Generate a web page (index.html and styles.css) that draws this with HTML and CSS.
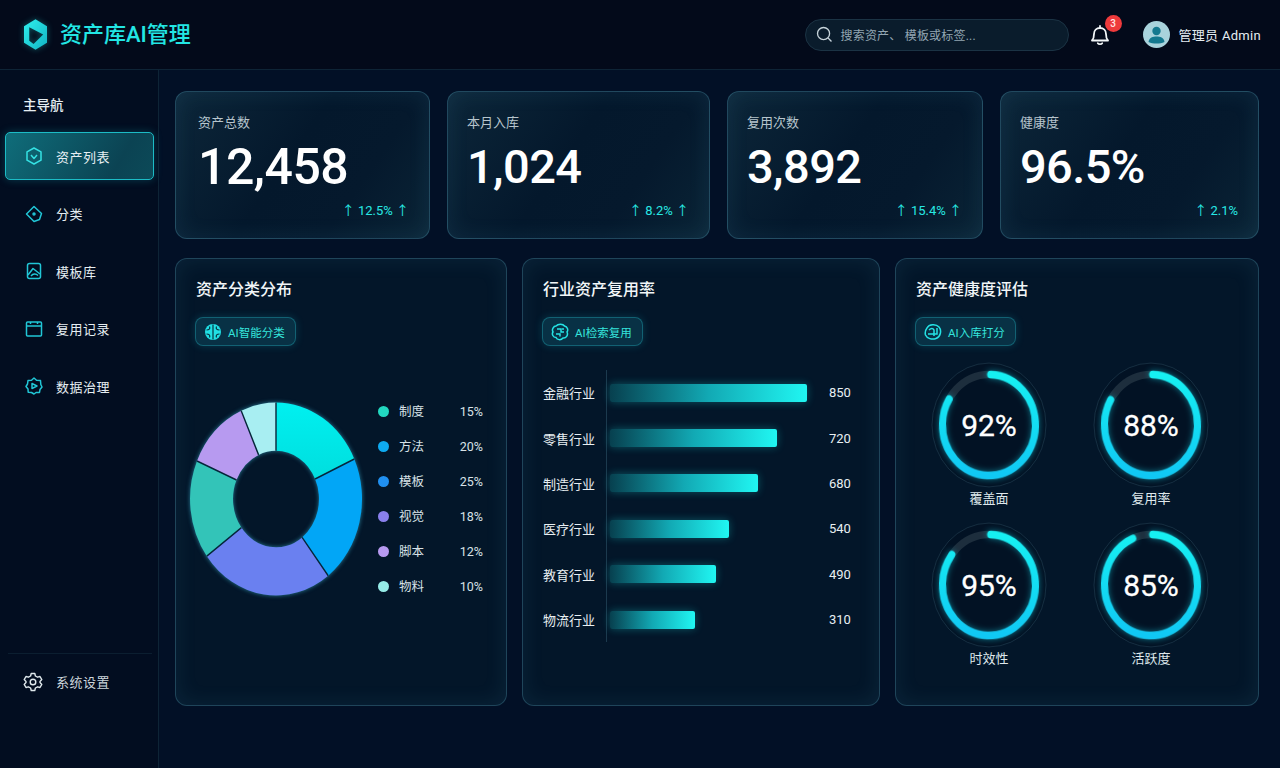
FILE: index.html
```html
<!DOCTYPE html>
<html lang="zh-CN">
<head>
  <meta charset="utf-8">
  <title>资产库AI管理</title>
  <link rel="stylesheet" href="styles.css">
</head>
<body>
  <!-- Top bar -->
  <header class="topbar">
    <svg class="logo" viewBox="0 0 24 32">
      <defs>
        <linearGradient id="logoFill" x1="0" y1="0" x2="1" y2="1">
          <stop offset="0" stop-color="#2ff0ee"/>
          <stop offset="1" stop-color="#12b4c4"/>
        </linearGradient>
      </defs>
      <path fill="url(#logoFill)" fill-rule="evenodd" d="M12 0 L24 7.5 V24.5 L12 32 L0 24.5 V7.5 Z M5.5 8.5 L20 16 L10 26 L5.5 22.5 Z"/>
    </svg>
    <h1 class="brand">资产库AI管理</h1>
    <div class="search">
      <svg class="search-icon" viewBox="0 0 18 18">
        <circle cx="8" cy="8" r="6.4"/>
        <path d="M12.8 12.8 L16.4 16.4"/>
      </svg>
      <span>搜索资产、 模板或标签...</span>
    </div>
    <div class="bell">
      <svg viewBox="0 0 22 22">
        <path d="M3 16.5 C5 14.5 5 12.5 5 10 C5 6.5 7.5 4 11 4 C14.5 4 17 6.5 17 10 C17 12.5 17 14.5 19 16.5 Z"/>
        <path d="M8.8 19.2 C9.6 20.4 12.4 20.4 13.2 19.2"/>
        <path d="M11 2 V4"/>
      </svg>
      <span class="badge">3</span>
    </div>
    <div class="user">
      <svg class="avatar" viewBox="0 0 27 27">
        <circle cx="13.5" cy="13.5" r="13.5" fill="#a9d3dc"/>
        <circle cx="13.5" cy="10" r="4.2" fill="#14798f"/>
        <path d="M5.5 21 C6 16.5 10 15.5 13.5 15.5 C17 15.5 21 16.5 21.5 21 C17 23 10 23 5.5 21 Z" fill="#14798f"/>
      </svg>
      <span>管理员 Admin</span>
    </div>
  </header>

  <div class="layout">
    <!-- Left navigation -->
    <nav class="sidebar">
      <div class="nav-title">主导航</div>
      <ul class="nav-list">
        <li class="nav-item active">
          <svg viewBox="0 0 18 18"><path d="M9 1 L16 4.8 V13.2 L9 17 L2 13.2 V4.8 Z"/><path d="M6 8 L9 11.5 L12 8"/></svg>
          <span>资产列表</span>
        </li>
        <li class="nav-item">
          <svg viewBox="0 0 18 18"><path d="M9 1.5 L16.5 8.5 L14.5 14.5 L9 16.5 L1.5 9 Z"/><circle cx="9" cy="9" r="1"/></svg>
          <span>分类</span>
        </li>
        <li class="nav-item">
          <svg viewBox="0 0 18 18"><rect x="2.5" y="1.5" width="13" height="15" rx="2"/><path d="M3 13 L8 6.5 L15 12"/><path d="M6 14 C8 11.5 11 11.5 13 13.5"/></svg>
          <span>模板库</span>
        </li>
        <li class="nav-item">
          <svg viewBox="0 0 18 18"><rect x="1.5" y="2" width="15" height="14" rx="1"/><path d="M1.5 6 H16.5"/><path d="M5.5 2 V4"/><path d="M12.5 2 V4"/></svg>
          <span>复用记录</span>
        </li>
        <li class="nav-item">
          <svg viewBox="0 0 18 18"><path d="M9 1 L11.5 3.2 L15.5 3.5 L15.8 7.5 L17 10 L15 12.5 L14.5 15.5 L11 15.5 L9 17 L6.5 15.5 L3.2 15.2 L3 12 L1 9.5 L2.5 7 L3 3.5 L6.5 3.2 Z"/><path d="M7 6.5 L12 9 L7 11.5 Z"/></svg>
          <span>数据治理</span>
        </li>
      </ul>
      <div class="sidebar-foot">
        <svg viewBox="0 0 20 20"><path d="M8.2 1.5 H11.8 L12.4 4 L14.6 5.2 L17 4.5 L18.8 7.6 L17 9.4 V10.6 L18.8 12.4 L17 15.5 L14.6 14.8 L12.4 16 L11.8 18.5 H8.2 L7.6 16 L5.4 14.8 L3 15.5 L1.2 12.4 L3 10.6 V9.4 L1.2 7.6 L3 4.5 L5.4 5.2 L7.6 4 Z"/><circle cx="10" cy="10" r="2.8"/></svg>
        <span>系统设置</span>
      </div>
    </nav>

    <main class="content">
      <!-- Headline figures -->
      <section class="stats">
        <div class="stat">
          <div class="stat-label">资产总数</div>
          <div class="stat-value">12,458</div>
          <div class="stat-delta">↑ 12.5% ↑</div>
        </div>
        <div class="stat">
          <div class="stat-label">本月入库</div>
          <div class="stat-value">1,024</div>
          <div class="stat-delta">↑ 8.2% ↑</div>
        </div>
        <div class="stat">
          <div class="stat-label">复用次数</div>
          <div class="stat-value">3,892</div>
          <div class="stat-delta">↑ 15.4% ↑</div>
        </div>
        <div class="stat">
          <div class="stat-label">健康度</div>
          <div class="stat-value">96.5%</div>
          <div class="stat-delta">↑ 2.1%</div>
        </div>
      </section>

      <section class="panels">
        <!-- Category donut -->
        <div class="panel">
          <h2>资产分类分布</h2>
          <div class="chip">
            <svg viewBox="0 0 18 18"><circle class="chip-disc" cx="9" cy="9" r="8"/><path d="M9 1.5 V16.5 M5.5 3.5 C6.5 6 5 7 2.5 7 M5.5 14.5 C6.5 12 5 11 2.5 11 M12.5 3.5 C11.5 6 13 7 15.5 7 M12.5 14.5 C11.5 12 13 11 15.5 11"/></svg>
            <span>AI智能分类</span>
          </div>
          <div class="donut-wrap">
            <svg class="donut" viewBox="-90 -90 180 180" preserveAspectRatio="none">
              <defs>
                <linearGradient id="segCyan" x1="0" y1="0" x2="0" y2="1">
                  <stop offset="0" stop-color="#00f0f0"/>
                  <stop offset="1" stop-color="#00dede"/>
                </linearGradient>
              </defs>
              <path fill="url(#segCyan)" d="M0 -86 A86 86 0 0 1 78.3 -35.7 L39.1 -17.8 A43 43 0 0 0 0 -43 Z"/>
              <path fill="#02a6f6" d="M78.3 -35.7 A86 86 0 0 1 52.2 68.3 L26.1 34.2 A43 43 0 0 0 39.1 -17.8 Z"/>
              <path fill="#6a80f0" d="M52.2 68.3 A86 86 0 0 1 -69.2 51 L-34.6 25.5 A43 43 0 0 0 26.1 34.2 Z"/>
              <path fill="#33c4b8" d="M-69.2 51 A86 86 0 0 1 -79 -33.9 L-39.5 -16.9 A43 43 0 0 0 -34.6 25.5 Z"/>
              <path fill="#b79af0" d="M-79 -33.9 A86 86 0 0 1 -34.8 -78.6 L-17.4 -39.3 A43 43 0 0 0 -39.5 -16.9 Z"/>
              <path fill="#a8eef2" d="M-34.8 -78.6 A86 86 0 0 1 0 -86 L0 -43 A43 43 0 0 0 -17.4 -39.3 Z"/>
              <path class="donut-gaps" d="M0 -86 L0 -43 M78.3 -35.7 L39.1 -17.8 M52.2 68.3 L26.1 34.2 M-69.2 51 L-34.6 25.5 M-79 -33.9 L-39.5 -16.9 M-34.8 -78.6 L-17.4 -39.3"/>
            </svg>
            <ul class="legend">
              <li><i class="dot dot-teal"></i><span>制度</span><b>15%</b></li>
              <li><i class="dot dot-sky"></i><span>方法</span><b>20%</b></li>
              <li><i class="dot dot-blue"></i><span>模板</span><b>25%</b></li>
              <li><i class="dot dot-violet"></i><span>视觉</span><b>18%</b></li>
              <li><i class="dot dot-lilac"></i><span>脚本</span><b>12%</b></li>
              <li><i class="dot dot-pale"></i><span>物料</span><b>10%</b></li>
            </ul>
          </div>
        </div>

        <!-- Industry bars -->
        <div class="panel">
          <h2>行业资产复用率</h2>
          <div class="chip">
            <svg viewBox="0 0 18 18"><path class="chip-line" d="M5 3 C7 0.5 12 0.5 13.5 3 C16.5 3.5 17.5 7 16 9 C17.5 12 15 15.5 12 15 C10 17.5 6 17 5 14.5 C2 14.5 0.5 11 2 9 C0.5 6.5 2.5 3 5 3 Z"/><path class="chip-line" d="M6 6 H10 V9 H13 M5 11 H9 V13.5 M12 5 V7"/></svg>
            <span>AI检索复用</span>
          </div>
          <div class="bars">
            <div class="bar-row"><span>金融行业</span><div class="track"><div class="bar" style="width:197px"></div></div><b>850</b></div>
            <div class="bar-row"><span>零售行业</span><div class="track"><div class="bar" style="width:167px"></div></div><b>720</b></div>
            <div class="bar-row"><span>制造行业</span><div class="track"><div class="bar" style="width:148px"></div></div><b>680</b></div>
            <div class="bar-row"><span>医疗行业</span><div class="track"><div class="bar" style="width:119px"></div></div><b>540</b></div>
            <div class="bar-row"><span>教育行业</span><div class="track"><div class="bar" style="width:106px"></div></div><b>490</b></div>
            <div class="bar-row"><span>物流行业</span><div class="track"><div class="bar" style="width:85px"></div></div><b>310</b></div>
          </div>
        </div>

        <!-- Health rings -->
        <div class="panel">
          <h2>资产健康度评估</h2>
          <div class="chip">
            <svg viewBox="0 0 18 18"><path class="chip-line" d="M3 5 C5 1 12 0.5 15 4 C18 7.5 16.5 14 12 15.5 C8 17 3 15.5 1.5 12 C0.8 9.5 1.5 7 3 5 Z"/><path class="chip-line" d="M5 7 C7 5 9 5 10 7 V13 M13 5 V11 H7 M4 11 H7"/></svg>
            <span>AI入库打分</span>
          </div>
          <div class="rings">
            <div class="ring-item">
              <div class="ring">
                <svg viewBox="0 0 116 116" preserveAspectRatio="none">
                  <defs>
                    <linearGradient id="arcFill" x1="1" y1="0" x2="0" y2="0">
                      <stop offset="0" stop-color="#16f0f2"/>
                      <stop offset="1" stop-color="#10c8f4"/>
                    </linearGradient>
                  </defs>
                  <circle class="ring-halo" cx="58" cy="58" r="57"/>
                  <circle class="ring-track" cx="58" cy="58" r="46.5"/>
                  <circle class="ring-arc" cx="58" cy="58" r="46.5" pathLength="360" stroke-dasharray="299 360" transform="rotate(-88 58 58)"/>
                </svg>
                <span class="ring-value">92%</span>
              </div>
              <div class="ring-label">覆盖面</div>
            </div>
            <div class="ring-item">
              <div class="ring">
                <svg viewBox="0 0 116 116" preserveAspectRatio="none">
                  <circle class="ring-halo" cx="58" cy="58" r="57"/>
                  <circle class="ring-track" cx="58" cy="58" r="46.5"/>
                  <circle class="ring-arc" cx="58" cy="58" r="46.5" pathLength="360" stroke-dasharray="298 360" transform="rotate(-88 58 58)"/>
                </svg>
                <span class="ring-value">88%</span>
              </div>
              <div class="ring-label">复用率</div>
            </div>
            <div class="ring-item">
              <div class="ring">
                <svg viewBox="0 0 116 116" preserveAspectRatio="none">
                  <circle class="ring-halo" cx="58" cy="58" r="57"/>
                  <circle class="ring-track" cx="58" cy="58" r="46.5"/>
                  <circle class="ring-arc" cx="58" cy="58" r="46.5" pathLength="360" stroke-dasharray="305 360" transform="rotate(-88 58 58)"/>
                </svg>
                <span class="ring-value">95%</span>
              </div>
              <div class="ring-label">时效性</div>
            </div>
            <div class="ring-item">
              <div class="ring">
                <svg viewBox="0 0 116 116" preserveAspectRatio="none">
                  <circle class="ring-halo" cx="58" cy="58" r="57"/>
                  <circle class="ring-track" cx="58" cy="58" r="46.5"/>
                  <circle class="ring-arc" cx="58" cy="58" r="46.5" pathLength="360" stroke-dasharray="335 360" transform="rotate(-88 58 58)"/>
                </svg>
                <span class="ring-value">85%</span>
              </div>
              <div class="ring-label">活跃度</div>
            </div>
          </div>
        </div>
      </section>
    </main>
  </div>
</body>
</html>
```

FILE: styles.css
```css
:root {
  --line: #0e2436;
  --cyan: #27e8e4;
  --text: #e6eef2;
  --panel-border: rgba(96, 178, 206, 0.3);
}

* {
  box-sizing: border-box;
}

body {
  margin: 0;
  width: 1280px;
  height: 768px;
  overflow: hidden;
  background: #021026;
  color: var(--text);
  font-family: "Roboto", "Noto Sans CJK SC", sans-serif;
  display: flex;
  flex-direction: column;
}

ul {
  list-style: none;
  margin: 0;
  padding: 0;
}

/* top bar */
.topbar {
  height: 70px;
  flex: none;
  display: flex;
  align-items: center;
  padding: 0 19px 0 24px;
  background: #030a1a;
  border-bottom: 1px solid var(--line);
}

.logo {
  width: 23px;
  height: 31px;
  filter: drop-shadow(0 0 3px rgba(40, 230, 230, 0.35));
}

.brand {
  margin: 0 0 5px 13px;
  font-size: 22px;
  font-weight: 500;
  color: #22e6e4;
}

.search {
  margin-left: auto;
  width: 264px;
  height: 32px;
  display: flex;
  align-items: center;
  gap: 8px;
  padding: 0 10px;
  background: #0a1c2c;
  border: 1px solid #1b3344;
  border-radius: 16px;
  font-size: 12px;
  letter-spacing: 0.2px;
  color: #93a6b2;
}

.search-icon {
  width: 17px;
  height: 17px;
  fill: none;
  stroke: #c6d3da;
  stroke-width: 1.4;
}

.bell {
  position: relative;
  width: 22px;
  height: 22px;
  margin-left: 20px;
}

.bell svg {
  width: 22px;
  height: 22px;
  fill: none;
  stroke: #f2f6f8;
  stroke-width: 1.8;
  stroke-linecap: round;
  stroke-linejoin: round;
}

.badge {
  position: absolute;
  top: -9px;
  left: 16px;
  width: 17px;
  height: 17px;
  border-radius: 50%;
  background: #ee3a3c;
  color: #ffe4e4;
  font-size: 10px;
  font-weight: 500;
  line-height: 17px;
  text-align: center;
}

.user {
  margin-left: 32px;
  display: flex;
  align-items: center;
  gap: 9px;
  font-size: 13px;
  letter-spacing: 0.3px;
}

.avatar {
  width: 27px;
  height: 27px;
}

/* sidebar + main */
.layout {
  flex: 1;
  display: flex;
  min-height: 0;
}

.sidebar {
  width: 159px;
  flex: none;
  display: flex;
  flex-direction: column;
  padding: 0 4px 0 5px;
  background: #020d20;
  border-right: 1px solid var(--line);
}

.nav-title {
  margin: 26px 0 0 18px;
  font-size: 13.5px;
  line-height: 18px;
  font-weight: 500;
}

.nav-list {
  margin-top: 18px;
  display: flex;
  flex-direction: column;
  gap: 9.5px;
}

.nav-item {
  height: 48px;
  display: flex;
  align-items: center;
  gap: 13px;
  padding-left: 19px;
  font-size: 13px;
  letter-spacing: 0.5px;
  border: 1px solid transparent;
  border-radius: 5px;
}

.nav-item svg {
  width: 18px;
  height: 18px;
  flex: none;
  fill: none;
  stroke: #21c6d6;
  stroke-width: 1.5;
  stroke-linejoin: round;
}

.nav-item.active {
  background: linear-gradient(120deg, #0f6d7a, #0b4353 75%, #0c4a58);
  border-color: #1cbcc6;
  box-shadow: 0 0 8px rgba(30, 200, 210, 0.25);
}

.nav-item.active svg {
  stroke: #35e2e4;
}

.sidebar-foot {
  margin-top: auto;
  height: 115px;
  padding: 18px 0 0 19px;
  margin-left: 3px;
  margin-right: 2px;
  display: flex;
  align-items: flex-start;
  gap: 13px;
  border-top: 1px solid #0b1e30;
  font-size: 13px;
  letter-spacing: 0.5px;
  color: #ccd6dc;
}

.sidebar-foot svg {
  width: 20px;
  height: 20px;
  margin-left: -4px;
  fill: none;
  stroke: #dfe8ec;
  stroke-width: 1.4;
  stroke-linejoin: round;
}

.content {
  flex: 1;
  min-width: 0;
  padding: 21px 21px 0 16px;
}

/* stat cards */
.stats {
  display: grid;
  grid-template-columns: 255px 263px 256px 259px;
  gap: 17px;
  height: 148px;
}

.stat,
.panel {
  border: 1px solid var(--panel-border);
  border-radius: 12px;
  box-shadow: inset 0 0 22px rgba(90, 180, 220, 0.1);
}

.stat {
  padding: 22px 19px 0;
  background: linear-gradient(125deg, #0c2639, #04182c 45%, #05192d 70%, #0a2436);
}

.stat:first-child {
  padding-left: 22px;
}

.stat-label {
  font-size: 13px;
  line-height: 18px;
  color: #b7c5cd;
}

.stat-value {
  margin-top: 7px;
  font-size: 47px;
  line-height: 56px;
  font-weight: 500;
  color: #fff;
  letter-spacing: -0.6px;
}

.stat:first-child .stat-value {
  font-size: 50px;
  letter-spacing: -0.5px;
}

.stat-delta {
  margin-top: 8px;
  padding-right: 1px;
  font-size: 13px;
  line-height: 16px;
  text-align: right;
  color: var(--cyan);
}

/* panels */
.panels {
  margin-top: 19px;
  height: 448px;
  display: grid;
  grid-template-columns: 332px 358px 364px;
  gap: 15px;
}

.panel {
  padding: 20px 20px 0;
  display: flex;
  flex-direction: column;
  align-items: flex-start;
  background: #031629;
}

.panel h2 {
  margin: 0 0 16px;
  font-size: 16px;
  line-height: 22px;
  font-weight: 500;
  color: #f2f6f8;
}

.chip {
  height: 29px;
  margin-left: -1px;
  display: inline-flex;
  align-items: center;
  gap: 6px;
  padding: 0 10px 0 8px;
  background: rgba(20, 110, 130, 0.32);
  border: 1px solid rgba(40, 190, 200, 0.35);
  border-radius: 8px;
  box-shadow: 0 0 8px rgba(30, 200, 220, 0.2);
  font-size: 11.5px;
  color: #35e4dc;
}

.chip svg {
  width: 18px;
  height: 18px;
  fill: none;
  stroke: #06333f;
  stroke-width: 1.2;
}

.chip-disc {
  fill: #21dfe4;
  stroke: none;
}

.chip .chip-line {
  stroke: #25e2e4;
  stroke-width: 1.5;
}

/* donut */
.donut-wrap {
  margin: 52px 0 0 -10px;
  display: flex;
  align-items: center;
  gap: 12px;
}

.donut {
  width: 180px;
  height: 202px;
  flex: none;
  filter: drop-shadow(0 0 2px rgba(70, 210, 245, 0.55));
}

.donut-gaps {
  fill: none;
  stroke: #06263a;
  stroke-width: 1.4;
}

.legend {
  width: 105px;
  display: flex;
  flex-direction: column;
  gap: 15px;
  font-size: 12.5px;
  line-height: 20px;
}

.legend li {
  display: flex;
  align-items: center;
  color: #d8e2e7;
}

.legend b {
  margin-left: auto;
  font-weight: 400;
}

.dot {
  width: 11px;
  height: 11px;
  margin-right: 10px;
  border-radius: 50%;
}

.dot-teal { background: #22d8c0; }
.dot-sky { background: #0eaaf0; }
.dot-blue { background: #2090f0; }
.dot-violet { background: #8a80ec; }
.dot-lilac { background: #b79af0; }
.dot-pale { background: #96ece8; }

/* bars */
.bars {
  margin-top: 24px;
  width: 100%;
  display: grid;
  grid-auto-rows: 45.4px;
}

.bar-row {
  display: grid;
  grid-template-columns: 63px 223px auto;
  align-items: center;
  font-size: 13px;
  color: #e8eff2;
}

.bar-row b {
  font-weight: 400;
}

.track {
  height: 100%;
  display: flex;
  align-items: center;
  padding-left: 3px;
  border-left: 1px solid #1c3a4e;
}

.bar {
  height: 18px;
  border-radius: 2px;
  background: linear-gradient(90deg, #07404f, #12a9b4 50%, #20f6f2);
  box-shadow: 0 0 8px rgba(30, 240, 240, 0.3);
}

/* rings */
.rings {
  margin: 16px 0 0 -8px;
  display: grid;
  grid-template-columns: 162px 162px;
  row-gap: 15px;
}

.ring-item {
  display: flex;
  flex-direction: column;
  align-items: center;
}

.ring {
  display: grid;
  place-items: center;
}

.ring svg,
.ring-value {
  grid-area: 1 / 1;
}

.ring svg {
  width: 116px;
  height: 126px;
}

.ring-halo {
  fill: rgba(2, 12, 28, 0.35);
  stroke: rgba(120, 180, 200, 0.2);
  stroke-width: 0.8;
}

.ring-track {
  fill: none;
  stroke: #1d2e3d;
  stroke-width: 7;
}

.ring-arc {
  fill: none;
  stroke: url(#arcFill);
  stroke-width: 7;
  stroke-linecap: round;
  filter: drop-shadow(0 0 3px rgba(20, 220, 240, 0.5));
}

.ring-value {
  font-size: 30px;
  color: #fff;
  -webkit-text-stroke: 0.3px #fff;
}

.ring-label {
  margin-top: 3px;
  font-size: 13px;
  line-height: 16px;
  color: #dfe8ec;
}
```
